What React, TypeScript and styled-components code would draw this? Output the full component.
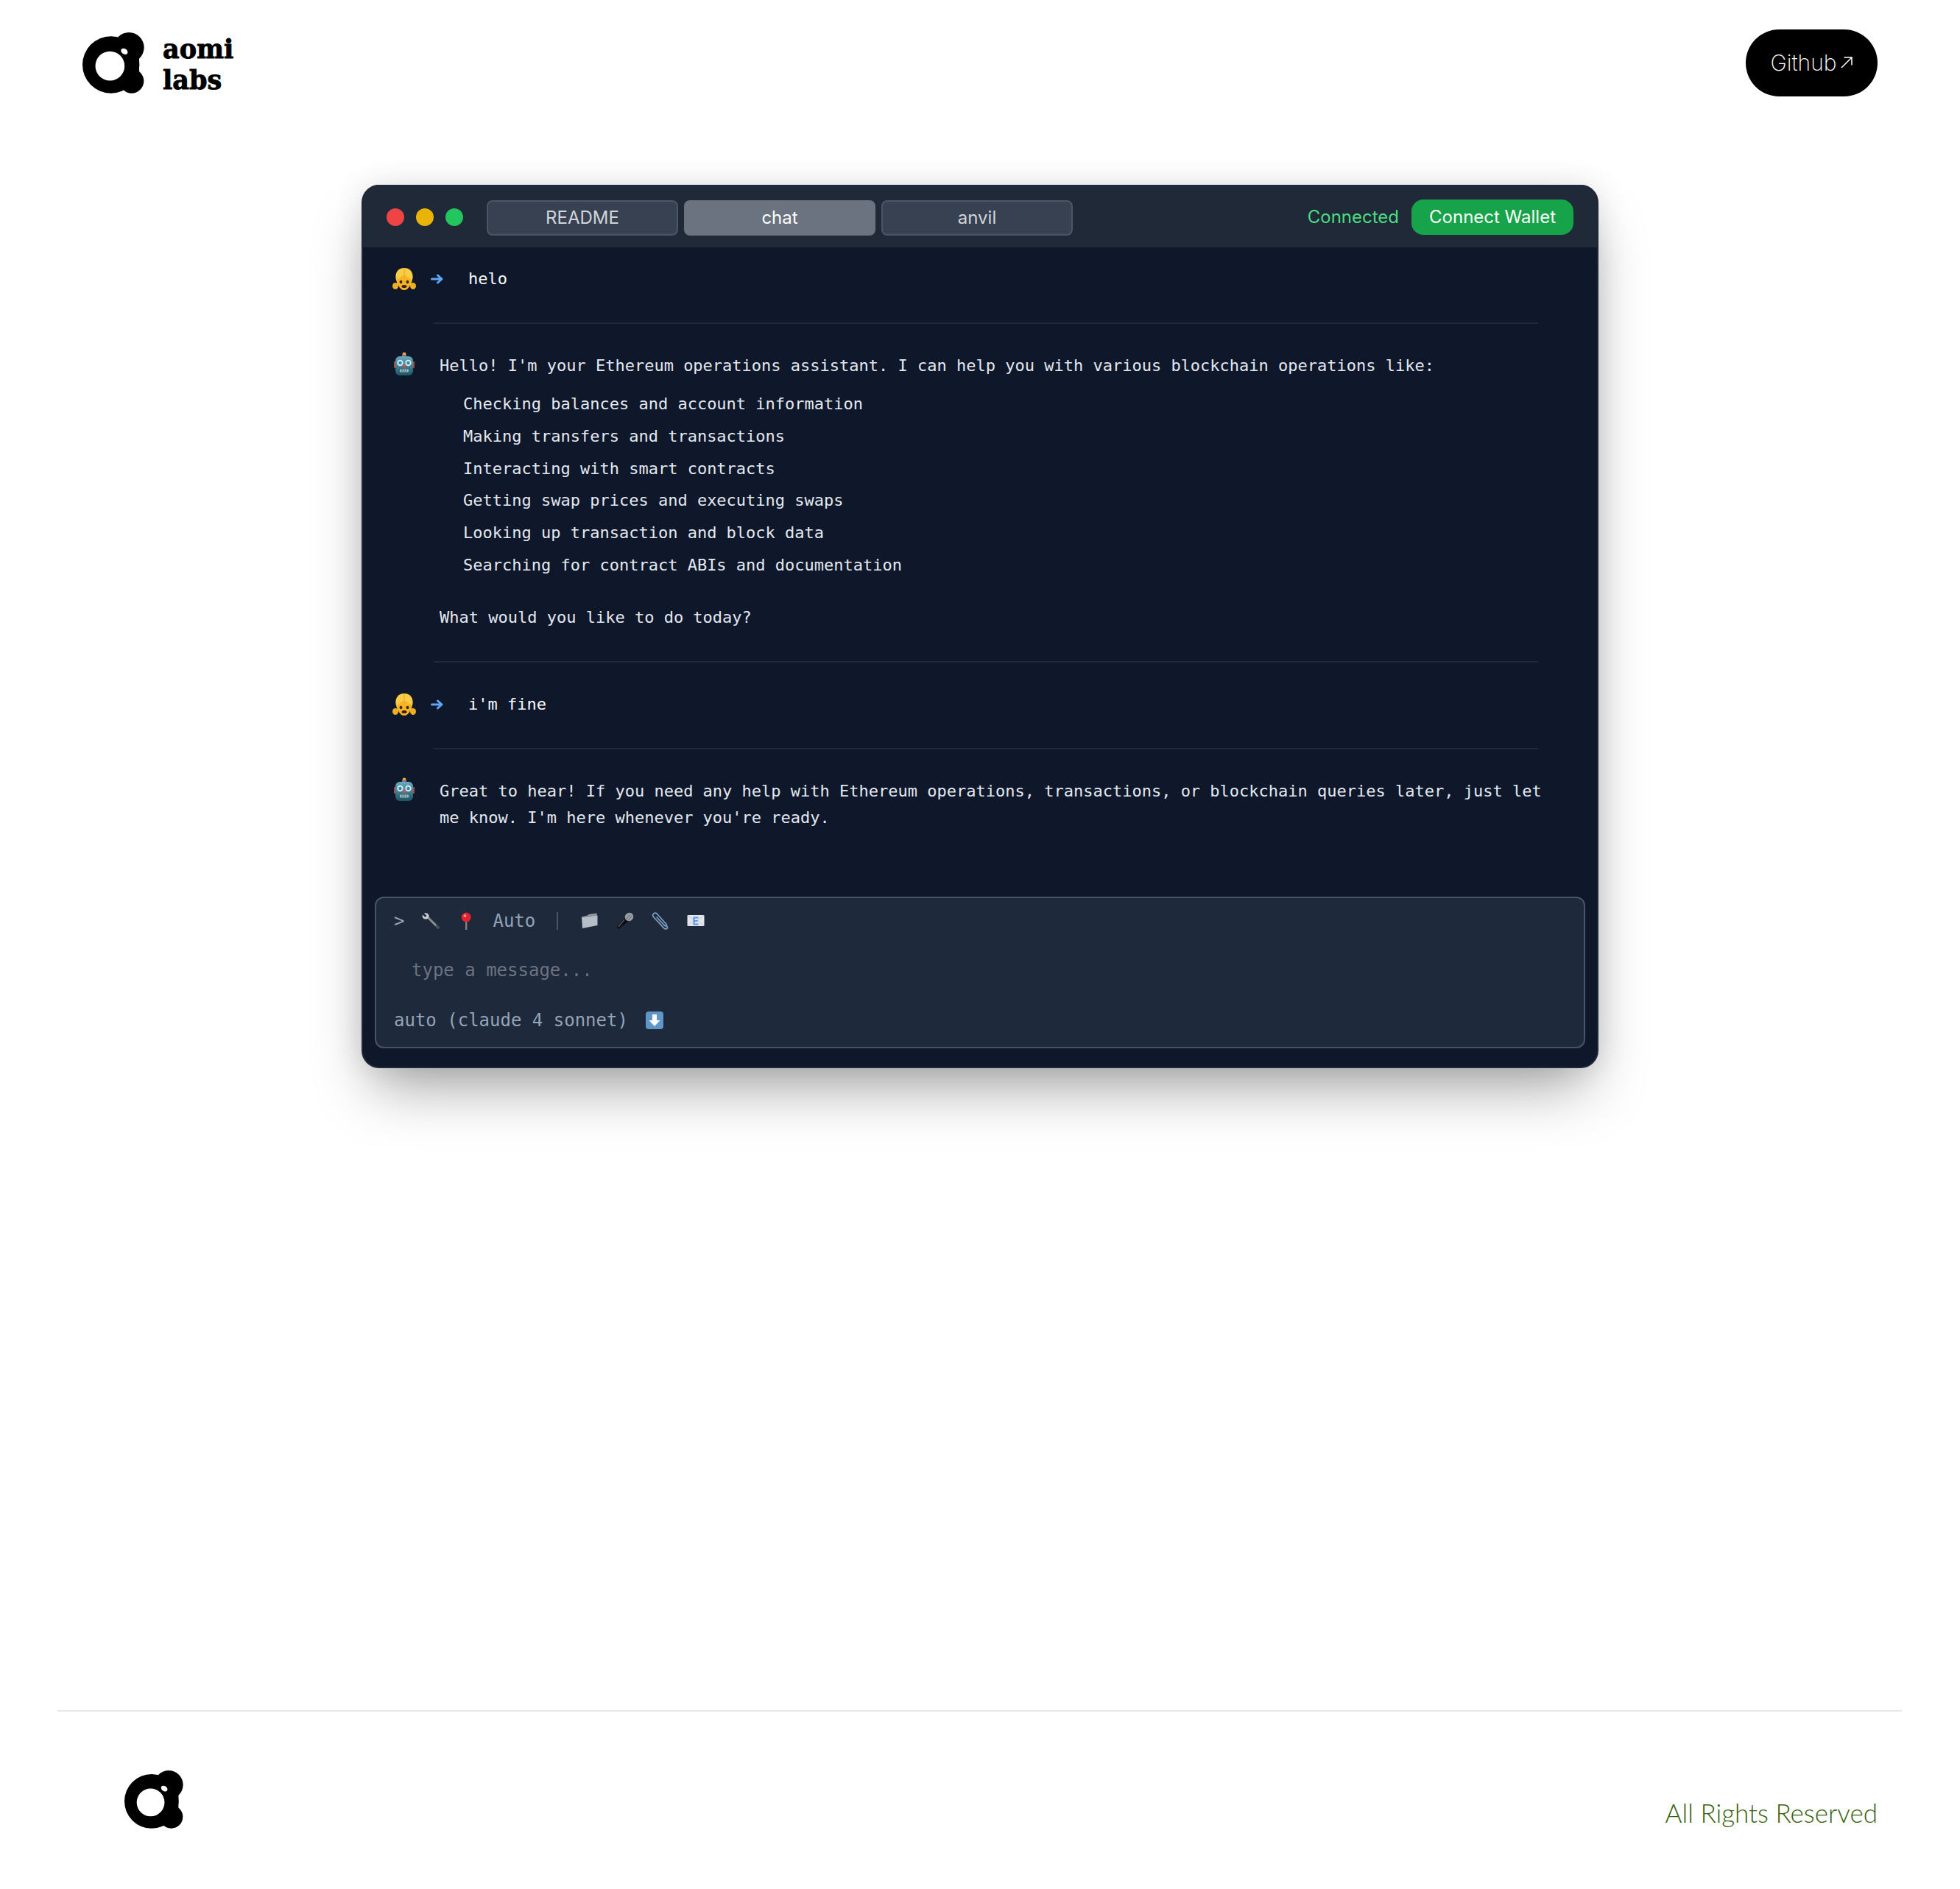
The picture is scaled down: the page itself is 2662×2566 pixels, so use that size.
import styled, { createGlobalStyle } from "styled-components"

const GlobalStyle = createGlobalStyle`
  html, body {
    margin: 0;
    padding: 0;
    background: #fff;
    overflow: hidden;
  }
  * {
    box-sizing: border-box;
  }
`

const LogoMark = ({ height }: { height: number }) => (
  <svg viewBox="97 72 254 251" height={height} width={(height * 254) / 251} style={{ flexShrink: 0 }}>
    <circle cx="214" cy="205" r="117" fill="#000" />
    <circle cx="288" cy="134" r="62" fill="#000" />
    <circle cx="299" cy="272" r="50" fill="#000" />
    <rect x="250" y="150" width="80" height="120" fill="#000" />
    <circle cx="210" cy="210" r="60" fill="#fff" />
    <ellipse cx="269" cy="150" rx="15" ry="11" transform="rotate(35 269 150)" fill="#fff" />
  </svg>
)

const Girl = () => (
  <svg viewBox="0 0 32 30" width="32" height="30">
    <ellipse cx="4" cy="24.500" rx="4" ry="4.500" fill="#f0ae22" />
    <ellipse cx="28" cy="24.500" rx="4" ry="4.500" fill="#f0ae22" />
    <path d="M16 0C8 0 3.500 6 4.500 14L7 23h18l2.500-9C28.500 6 24 0 16 0z" fill="#f9cc45" />
    <path d="M16 8c-3 4-7 6-9.500 7C6 22 10 30 16 30s10-8 9.500-15C23 14 19 12 16 8z" fill="#f6b425" />
    <path d="M16 1v7" stroke="#e0a21f" strokeWidth="1" />
    <ellipse cx="11.500" cy="19" rx="1.900" ry="2.300" fill="#3b2a14" />
    <ellipse cx="20.500" cy="19" rx="1.900" ry="2.300" fill="#3b2a14" />
    <ellipse cx="16" cy="25" rx="3.500" ry="2" fill="#3c1a0a" />
  </svg>
)

const Robot = () => (
  <svg viewBox="0 0 28 32" width="28" height="32">
    <defs>
      <linearGradient id="robotHead" x1="0" y1="0" x2="0" y2="1">
        <stop offset="0" stopColor="#6aaabb" />
        <stop offset="1" stopColor="#1c5566" />
      </linearGradient>
    </defs>
    <circle cx="14" cy="3" r="2.500" fill="#e8a33c" />
    <rect x="11" y="4" width="6" height="3" fill="#7d6aa8" />
    <rect x="0" y="13" width="3" height="9" rx="1" fill="#b0473e" />
    <rect x="25" y="13" width="3" height="9" rx="1" fill="#b0473e" />
    <rect x="2" y="6" width="24" height="26" rx="6" fill="url(#robotHead)" />
    <circle cx="8.500" cy="15" r="4.200" fill="#c9eef6" />
    <circle cx="19.500" cy="15" r="4.200" fill="#c9eef6" />
    <circle cx="8.500" cy="15" r="2.200" fill="#3b85a3" />
    <circle cx="19.500" cy="15" r="2.200" fill="#3b85a3" />
    <path d="M14 15l2.500 5.500h-5z" fill="#d9534a" />
    <rect x="8" y="23.500" width="12" height="4" rx="1.500" fill="#a9bcc2" />
    <path d="M11 23.500v4M14 23.500v4M17 23.500v4" stroke="#35616e" strokeWidth="1" />
  </svg>
)

const BlueArrow = () => (
  <svg viewBox="0 0 18 14" width="18" height="14">
    <path d="M1.500 7h13M9.500 2l5.500 5-5.500 5" fill="none" stroke="#60a5fa" strokeWidth="3" strokeLinecap="round" strokeLinejoin="round" />
  </svg>
)

const Wrench = () => (
  <svg viewBox="0 0 24 24" width="24" height="24">
    <path d="M8 7l14 14" stroke="#8b8f94" strokeWidth="3" strokeLinecap="round" />
    <path d="M20 19l2 2" stroke="#4b4f55" strokeWidth="3" strokeLinecap="round" />
    <path d="M3 1.500L6.500 5 4.500 7 1 3.500C0 6 1 9 4.500 9.500 7.500 10 10 7.500 9.500 4.500 9 1.500 5.500 0.500 3 1.500z" fill="#c9ced3" />
  </svg>
)

const Pin = () => (
  <svg viewBox="0 0 24 24" width="24" height="24">
    <rect x="11" y="10" width="2.400" height="14" fill="#8a8078" />
    <circle cx="12.200" cy="7" r="6.500" fill="#e0242f" />
    <circle cx="10.500" cy="5" r="2" fill="#f6858a" />
  </svg>
)

const Folder = () => (
  <svg viewBox="0 0 24 24" width="24" height="24">
    <path d="M1 6l8-1.500 1.500-1.500 11-1.500.5 3-21 2z" fill="#8e99a3" />
    <path d="M1 7l21.500-2.500V18L2 22z" fill="#b5bec6" />
  </svg>
)

const Mic = () => (
  <svg viewBox="0 0 24 24" width="24" height="24">
    <path d="M12 7L1 20c-.5 1 1.500 3 2.500 2.500L17 12z" fill="#0d0e10" />
    <path d="M11 10L3 20" stroke="#50545a" strokeWidth="1.500" />
    <ellipse cx="17.500" cy="6.500" rx="6" ry="5.500" transform="rotate(-40 17.500 6.500)" fill="#9a9fa5" />
    <path d="M13.500 9.500l5.500-7M16 11.500l5.500-7" stroke="#63686e" strokeWidth="1" />
  </svg>
)

const Clip = () => (
  <svg viewBox="0 0 24 24" width="24" height="24">
    <path d="M21 19.500c1.500 2.500-1.500 4.500-4 2.500L2.500 6.500C0 3 4 -0.500 7 2L20 16.500c1 1.500-.5 3-2 2L7 7" fill="none" stroke="#7ea1c4" strokeWidth="1.700" strokeLinecap="round" />
  </svg>
)

const Envelope = () => (
  <svg viewBox="0 0 24 24" width="24" height="24">
    <rect x="0.500" y="4" width="23" height="15" rx="1" fill="#e3e6ea" />
    <path d="M1 4.500l11 8 11-8M1 18.500l8-7M23 18.500l-8-7" fill="none" stroke="#c2c7cd" strokeWidth="1" />
    <path d="M15.500 7.500H9.500v9h6M9.500 12h5" fill="none" stroke="#4f94ea" strokeWidth="2" />
  </svg>
)

const DownButton = () => (
  <svg viewBox="0 0 24 24" width="24" height="24">
    <rect x="0" y="0" width="24" height="24" rx="4" fill="#5f96c6" />
    <path d="M9 4h6v8h4.500L12 20 4.500 12H9z" fill="#fff" />
  </svg>
)

const Up = () => (
  <svg viewBox="0 0 16 16" width="16" height="16">
    <path d="M1 15L15 1M4.500 1H15v10.500" fill="none" stroke="#fff" strokeWidth="1.500" />
  </svg>
)

const TABS = ["README", "chat", "anvil"]
const ITEMS = [
  "Checking balances and account information",
  "Making transfers and transactions",
  "Interacting with smart contracts",
  "Getting swap prices and executing swaps",
  "Looking up transaction and block data",
  "Searching for contract ABIs and documentation",
]

export default function App() {
  return (
    <Page>
      <GlobalStyle />
      <Header>
        <Brand>
          <LogoMark height={83} />
          <Wordmark>aomi<br />labs</Wordmark>
        </Brand>
        <GithubLink href="#">Github<Up /></GithubLink>
      </Header>

      <Main>
        <Terminal>
          <TitleBar>
            <Dots>
              <Dot $color="#ef4444" />
              <Dot $color="#eab308" />
              <Dot $color="#22c55e" />
            </Dots>
            <Tabs>
              {TABS.map((t) => (
                <Tab key={t} $active={t === "chat"}>{t}</Tab>
              ))}
            </Tabs>
            <WalletArea>
              <Status>Connected</Status>
              <WalletButton>Connect Wallet</WalletButton>
            </WalletArea>
          </TitleBar>

          <Conversation>
            <UserRow>
              <Girl />
              <BlueArrow />
              <UserText>helo</UserText>
            </UserRow>
            <Divider />
            <AssistantRow>
              <RobotSlot><Robot /></RobotSlot>
              <AssistantBody>
                <div>Hello! I'm your Ethereum operations assistant. I can help you with various blockchain operations like:</div>
                <List>
                  {ITEMS.map((item) => (
                    <li key={item}>{item}</li>
                  ))}
                </List>
                <Closing>What would you like to do today?</Closing>
              </AssistantBody>
            </AssistantRow>
            <Divider />
            <UserRow>
              <Girl />
              <BlueArrow />
              <UserText>i'm fine</UserText>
            </UserRow>
            <Divider />
            <AssistantRow>
              <RobotSlot><Robot /></RobotSlot>
              <AssistantBody>
                Great to hear! If you need any help with Ethereum operations, transactions, or blockchain queries later, just let me know. I'm here whenever you're ready.
              </AssistantBody>
            </AssistantRow>
          </Conversation>

          <Composer>
            <ComposerTools>
              <span>&gt;</span>
              <Wrench />
              <Pin />
              <span>Auto</span>
              <ToolSeparator />
              <Folder />
              <Mic />
              <Clip />
              <Envelope />
            </ComposerTools>
            <Placeholder>type a message...</Placeholder>
            <ModelRow>
              <span>auto (claude 4 sonnet)</span>
              <DownButton />
            </ModelRow>
          </Composer>
        </Terminal>
      </Main>

      <Footer>
        <LogoMark height={79} />
        <Rights>All Rights Reserved</Rights>
      </Footer>
    </Page>
  )
}

const Page = styled.div`
  width: 2662px;
  height: 2566px;
  display: flex;
  flex-direction: column;
  background: #fff;
`
const Header = styled.header`
  display: flex;
  justify-content: space-between;
  align-items: center;
  padding: 40px 112px 0;
`
const Brand = styled.div`
  display: flex;
  align-items: center;
  gap: 25px;
`
const Wordmark = styled.div`
  margin-top: 4px;
  font-family: "DejaVu Serif", serif;
  font-weight: 700;
  font-size: 35px;
  line-height: 42px;
  color: #000;
  -webkit-text-stroke: 0.9px #000;
`
const GithubLink = styled.a`
  width: 179px;
  height: 91px;
  padding-bottom: 2px;
  border-radius: 46px;
  background: #000;
  color: #fff;
  font-family: Inter, sans-serif;
  font-weight: 250;
  font-size: 30px;
  text-decoration: none;
  display: flex;
  align-items: center;
  justify-content: center;
  gap: 6px;
`
const Main = styled.main`
  display: flex;
  justify-content: center;
  margin-top: 120px;
`
const Terminal = styled.section`
  width: 1680px;
  height: 1200px;
  display: flex;
  flex-direction: column;
  background: #0f172a;
  border-radius: 24px;
  border: 2px solid #1e293b;
  border-top-width: 0;
  box-shadow: 0 40px 80px -16px rgba(0, 0, 0, 0.36), 0 0 40px rgba(0, 0, 0, 0.1);
  padding-bottom: 25px;
`
const TitleBar = styled.div`
  height: 85px;
  flex-shrink: 0;
  display: flex;
  align-items: center;
  padding: 3px 32px 0;
  background: #1f2937;
  border-radius: 22px 22px 0 0;
`
const Dots = styled.div`
  display: flex;
  gap: 16px;
`
const Dot = styled.span<{ $color: string }>`
  width: 24px;
  height: 24px;
  border-radius: 50%;
  background: ${(p) => p.$color};
`
const Tabs = styled.div`
  display: flex;
  gap: 8px;
  margin: 2px 0 0 32px;
`
const Tab = styled.div<{ $active?: boolean }>`
  width: 260px;
  height: 48px;
  padding-bottom: 1px;
  border-radius: 8px;
  border: 2px solid ${(p) => (p.$active ? "#6b7280" : "#4b5563")};
  background: ${(p) => (p.$active ? "#6b7280" : "#374151")};
  color: ${(p) => (p.$active ? "#fff" : "#d1d5db")};
  font-family: Inter, sans-serif;
  font-size: 24px;
  display: flex;
  align-items: center;
  justify-content: center;
`
const WalletArea = styled.div`
  margin-left: auto;
  display: flex;
  align-items: center;
  gap: 17px;
`
const Status = styled.span`
  margin-top: -2px;
  font-family: Inter, sans-serif;
  font-size: 24px;
  color: #4ade80;
`
const WalletButton = styled.button`
  height: 48px;
  padding: 0 24px 2px;
  border: none;
  border-radius: 16px;
  background: #16a34a;
  color: #fff;
  font-family: Inter, sans-serif;
  font-size: 24px;
  font-weight: 400;
`
const Conversation = styled.div`
  flex: 1;
  padding-top: 25px;
  font-family: "DejaVu Sans Mono", monospace;
  font-size: 22px;
  line-height: 36px;
  color: #e2e8f0;
`
const UserRow = styled.div`
  display: grid;
  grid-template-columns: 32px 18px auto;
  column-gap: 20px;
  align-items: center;
  padding-left: 40px;
`
const UserText = styled.span`
  padding-left: 13px;
  color: #f8fafc;
`
const Divider = styled.hr`
  height: 2px;
  margin: 41px 80px 39px 96px;
  border: none;
  background: #1e293b;
`
const AssistantRow = styled.div`
  display: flex;
  gap: 34px;
  padding: 0 59px 0 42px;
`
const RobotSlot = styled.div`
  flex-shrink: 0;
  width: 28px;
  height: 32px;
  margin-top: -1px;
`
const AssistantBody = styled.div`
  flex: 1;
`
const List = styled.ul`
  list-style: none;
  margin: 16px 0 0;
  padding: 0 0 0 32px;
  li + li {
    margin-top: 7.8px;
  }
`
const Closing = styled.div`
  margin-top: 35px;
`
const Composer = styled.div`
  margin: 0 16px;
  padding: 13px 24px 18px;
  background: #1e293b;
  border: 2px solid #475569;
  border-radius: 12px;
  font-family: "DejaVu Sans Mono", monospace;
  font-size: 24px;
  line-height: 36px;
  color: #94a3b8;
`
const ComposerTools = styled.div`
  display: flex;
  align-items: center;
  gap: 24px;
  height: 36px;
`
const ToolSeparator = styled.span`
  width: 2px;
  height: 24px;
  margin: 0 7px 0 5px;
  background: #475569;
`
const Placeholder = styled.div`
  margin: 31px 0 0 24px;
  color: #6b7280;
`
const ModelRow = styled.div`
  margin-top: 32px;
  display: flex;
  align-items: center;
  gap: 24px;
`
const Footer = styled.footer`
  margin: auto 79px 0 78px;
  padding: 80px 33px 82px 91px;
  border-top: 2px solid #e5e7eb;
  display: flex;
  justify-content: space-between;
  align-items: flex-end;
`
const Rights = styled.div`
  font-family: Lato, sans-serif;
  font-weight: 300;
  font-size: 35px;
  line-height: 44px;
  color: #38600f;
`
